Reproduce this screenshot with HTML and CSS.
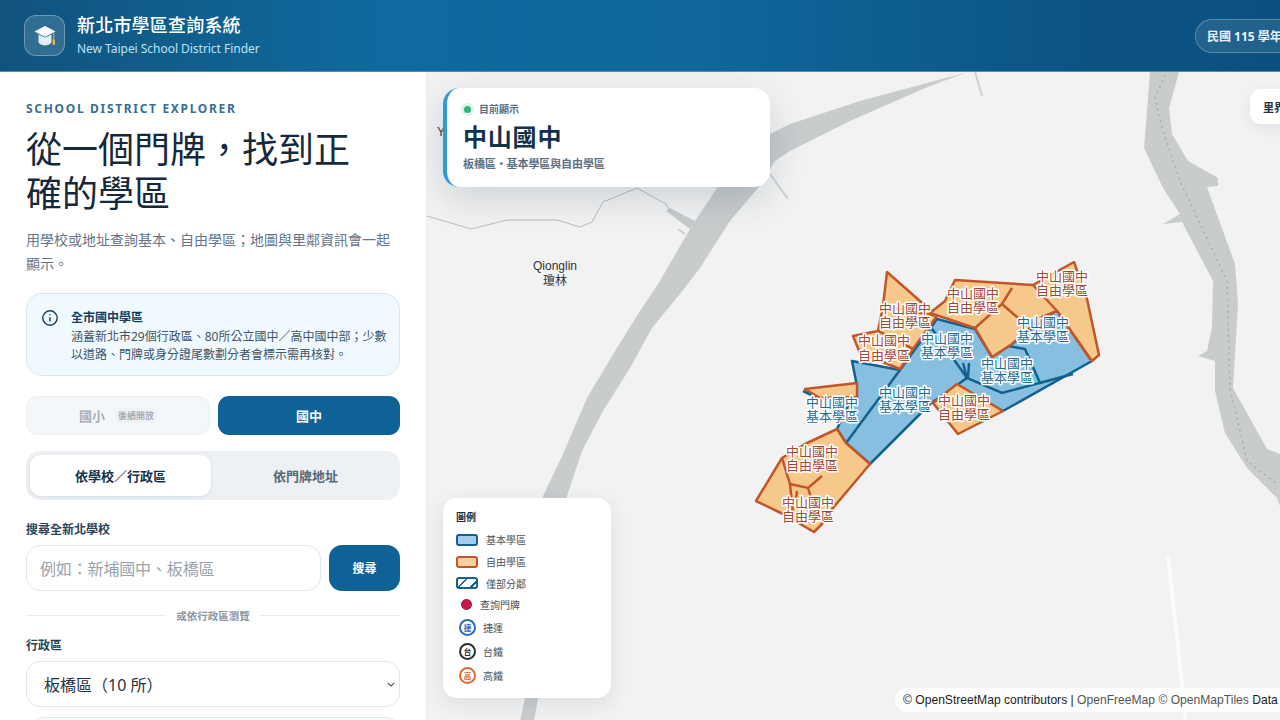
FILE: index.html
```html
<!DOCTYPE html>
<html lang="zh-Hant">
<head>
<meta charset="utf-8">
<title>新北市學區查詢系統</title>
<link rel="stylesheet" href="styles.css">
</head>
<body>
<div class="app">
  <header class="topbar">
    <div class="brand">
      <div class="logo">
        <svg width="24" height="24" viewBox="0 0 24 24">
          <path class="cap-body" d="M5.500 10.500v7c0 2.200 3 3.900 6.500 3.900s6.500-1.700 6.500-3.900v-7l-6.500 3z"/>
          <path class="cap-top" d="M12 2 1.500 7.500 12 12.800l10.500-5.300z"/>
          <path class="cap-cord" d="M20.800 8.500v8"/>
          <rect class="cap-tassel" x="19.600" y="15.500" width="2.400" height="5.500" rx="1"/>
        </svg>
      </div>
      <div class="brand-text">
        <div class="brand-title">新北市學區查詢系統</div>
        <div class="brand-sub">New Taipei School District Finder</div>
      </div>
    </div>
    <div class="year-pill">民國 115 學年度</div>
  </header>
  <main class="layout">
    <aside class="sidebar">
      <div class="eyebrow">SCHOOL DISTRICT EXPLORER</div>
      <h1 class="headline">從一個門牌&#xFF0C;找到正確的學區</h1>
      <p class="lead">用學校或地址查詢基本、自由學區&#xFF1B;地圖與里鄰資訊會一起顯示。</p>
      <div class="notice">
        <svg class="notice-icon" width="18" height="18" viewBox="0 0 18 18">
          <circle cx="9" cy="9" r="7.200"/>
          <path d="M9 8.200v4.300M9 5.300v1"/>
        </svg>
        <div class="notice-body">
          <div class="notice-title">全市國中學區</div>
          <div class="notice-text">涵蓋新北市29個行政區、80所公立國中&#xFF0F;高中國中部&#xFF1B;少數以道路、門牌或身分證尾數劃分者會標示需再核對。</div>
        </div>
      </div>
      <div class="levels">
        <div class="level level-off">國小<span class="level-tag">後續開放</span></div>
        <div class="level level-on">國中</div>
      </div>
      <div class="tabs">
        <div class="tab tab-on">依學校&#xFF0F;行政區</div>
        <div class="tab">依門牌地址</div>
      </div>
      <div class="field-label">搜尋全新北學校</div>
      <div class="search-row">
        <div class="input">例如&#xFF1A;新埔國中、板橋區</div>
        <div class="search-btn">搜尋</div>
      </div>
      <div class="divider"><span>或依行政區瀏覽</span></div>
      <div class="field-label">行政區</div>
      <div class="select">
        <span>板橋區&#xFF08;10 所&#xFF09;</span>
        <svg width="8" height="5" viewBox="0 0 10 6"><path d="M1 1l4 4 4-4"/></svg>
      </div>
      <div class="next-box"></div>
    </aside>
    <section class="map">
      <svg class="map-canvas" viewBox="427 71 853 649" width="853" height="649">
        <polygon class="water" points="968,71 860,100 790,123 770,133 745,150 717,187 695,220 680,245 660,280 640,310 615,350 587,397 563,453 543,495 525,697 520,720 534,720 538,697 567,495 582,450 603,410 630,367 652,327 680,293 700,267 730,220 758,187 775,160 790,150 850,120 930,85"/>
        <polygon class="water" points="666,210 670,207 695,220 690,228"/>
        <polygon class="water" points="1150,71 1144,147 1163,187 1180,213 1163,223 1182,221 1213,280 1212,327 1207,350 1198,355 1215,360 1215,390 1225,432 1247,467 1277,497 1280,505 1280,453 1267,448 1233,387 1238,303 1235,263 1207,186 1218,185 1218,177 1188,160 1172,133 1169,107 1179,71"/>
        <path class="water-line" d="M1165 74 L1155 97 L1163 130 L1180 180 L1227 280 L1230 387 L1247 460 L1277 483"/>
        <path class="thin" d="M770 173 L788 198 M975 71 L982 95 M678 228 L685 233"/>
        <path class="road-w" d="M1168 555 L1186 720"/>
        <path class="border" d="M427 215 L471 228 L507 219 L557 219 L580 226 L592 221 L603 201 L637 187 L666 203 L670 210"/>

        <polygon class="zone-basic" points="852,360 900,369 937,318 975,328 992,356 1012,343 1058,308 1070,325 1092,360 1003,410 957,384 930,403 870,463 846,442 837,428 857,385"/>
        <path class="line-basic" d="M930 325 L967 377 L1002 392 L1073 373 L1040 382 L1025 348 L1008 345 M967 377 L957 384 M846 442 L900 369 M963 362 L967 377 M969 362 L968 377 M803 390 L820 398"/>
        <g class="zone-free">
          <polygon points="887,271 883,305 878,330 913,348 937,315"/>
          <polygon points="853,335 878,330 913,348 900,368 860,352"/>
          <polygon points="805,388 857,382 857,396 820,397"/>
          <polygon points="955,279 1033,284 1040,280 1074,261 1087,298 1099,354 1092,360 1057,310 1042,316 1012,343 992,356 975,327 930,312 945,300"/>
          <polygon points="957,383 933,402 958,433 1003,410"/>
          <polygon points="870,463 846,442 837,428 805,443 782,457 756,500 783,513 814,531 822,523 833,507"/>
        </g>
        <path class="line-free" d="M1012 287 L1002 303 L975 327 M1002 303 L1018 317 M1033 284 L1057 310 L1090 358 M782 457 L790 483 L793 512 M790 483 L808 487 L822 475 M808 487 L813 503 M797 490 L796 500 M883 305 L937 315"/>

        <g class="labels">
          <text class="lb-free"><tspan x="905" y="312">中山國中</tspan><tspan x="905" dy="14">自由學區</tspan></text>
          <text class="lb-free"><tspan x="973" y="297">中山國中</tspan><tspan x="973" dy="14">自由學區</tspan></text>
          <text class="lb-free"><tspan x="1062" y="280">中山國中</tspan><tspan x="1062" dy="14">自由學區</tspan></text>
          <text class="lb-free"><tspan x="884" y="344">中山國中</tspan><tspan x="884" dy="15">自由學區</tspan></text>
          <text class="lb-free"><tspan x="964" y="404">中山國中</tspan><tspan x="964" dy="14">自由學區</tspan></text>
          <text class="lb-free"><tspan x="812" y="455">中山國中</tspan><tspan x="812" dy="14">自由學區</tspan></text>
          <text class="lb-free"><tspan x="808" y="506">中山國中</tspan><tspan x="808" dy="14">自由學區</tspan></text>
          <text class="lb-basic"><tspan x="947" y="342">中山國中</tspan><tspan x="947" dy="14">基本學區</tspan></text>
          <text class="lb-basic"><tspan x="1043" y="326">中山國中</tspan><tspan x="1043" dy="14">基本學區</tspan></text>
          <text class="lb-basic"><tspan x="1007" y="367">中山國中</tspan><tspan x="1007" dy="14">基本學區</tspan></text>
          <text class="lb-basic"><tspan x="905" y="396">中山國中</tspan><tspan x="905" dy="14">基本學區</tspan></text>
          <text class="lb-basic"><tspan x="832" y="406">中山國中</tspan><tspan x="832" dy="14">基本學區</tspan></text>
          <text class="lb-place"><tspan x="555" y="269">Qionglin</tspan><tspan x="555" dy="15">瓊林</tspan></text>
          <text class="lb-place" x="441" y="135">Y</text>
        </g>
      </svg>

      <div class="current">
        <div class="current-status"><span class="status-dot"></span>目前顯示</div>
        <div class="current-name">中山國中</div>
        <div class="current-sub">板橋區・基本學區與自由學區</div>
      </div>
      <div class="boundary-chip">里界顯示</div>
      <div class="legend">
        <div class="legend-title">圖例</div>
        <div class="legend-row"><span class="swatch sw-basic"></span>基本學區</div>
        <div class="legend-row"><span class="swatch sw-free"></span>自由學區</div>
        <div class="legend-row"><span class="swatch sw-part"></span>僅部分鄰</div>
        <div class="legend-row row-dot"><span class="pin"></span>查詢門牌</div>
        <div class="legend-row row-st"><span class="st st-mrt">捷</span>捷運</div>
        <div class="legend-row row-st"><span class="st st-tra">台</span>台鐵</div>
        <div class="legend-row row-st"><span class="st st-hsr">高</span>高鐵</div>
      </div>
      <div class="attrib">© OpenStreetMap contributors | <span class="attrib-link">OpenFreeMap © OpenMapTiles</span> Data from OpenStreetMap</div>
    </section>
  </main>
</div>
</body>
</html>
```
FILE: styles.css
```css
* { box-sizing: border-box; }
html, body { margin: 0; height: 100%; }
body {
  font-family: "Noto Sans", "Noto Sans CJK TC", sans-serif;
  color: #14324a;
  overflow: hidden;
  background: #fff;
}
.app { width: 1280px; height: 720px; display: flex; flex-direction: column; overflow: hidden; }

.topbar {
  height: 72px;
  flex: none;
  display: flex;
  align-items: center;
  justify-content: space-between;
  padding: 0 0 0 24px;
  background: linear-gradient(90deg, #11537d 0%, #0f6a9f 30%, #0f679b 55%, #0c5384 85%, #0b5080 100%);
  border-bottom: 1px solid #5d8cab;
  overflow: hidden;
}
.brand { display: flex; align-items: center; gap: 12px; }
.logo {
  width: 41px; height: 41px;
  border-radius: 12px;
  background: rgba(255,255,255,.14);
  border: 1px solid rgba(255,255,255,.3);
  display: flex; align-items: center; justify-content: center;
}
.cap-top { fill: #fff; }
.cap-body { fill: #e3edf3; }
.cap-cord { stroke: #e9b949; stroke-width: 1; fill: none; }
.cap-tassel { fill: #e9b949; }
.brand-text { display: flex; flex-direction: column; gap: 2px; margin-top: -1px; }
.brand-title { font-size: 18px; font-weight: 500; line-height: 26px; color: #fff; letter-spacing: .2px; }
.brand-sub { font-size: 12px; line-height: 18px; color: #bfe2f6; letter-spacing: -.03px; }
.year-pill {
  width: 130px; height: 34px;
  margin-right: -45px;
  flex: none;
  display: flex; align-items: center;
  padding-left: 11px;
  border-radius: 17px;
  background: rgba(255,255,255,.1);
  border: 1px solid rgba(255,255,255,.25);
  color: #e4f3fb;
  font-size: 12px;
  font-weight: 700;
  white-space: nowrap;
}

.layout { flex: 1; display: flex; min-height: 0; }
.sidebar {
  width: 427px;
  flex: none;
  padding: 28px 26px 0 26px;
  background: #fff;
  border-right: 1px solid #e6eaed;
  overflow: hidden;
}
.eyebrow { font-size: 12px; font-weight: 700; letter-spacing: 1.68px; color: #3b6e91; line-height: 18px; }
.headline {
  margin: 7px 0 0;
  max-width: 340px;
  font-family: "Noto Sans CJK TC", sans-serif;
  font-size: 36px;
  font-weight: 400;
  line-height: 44px;
  color: #15293b;
}
.lead { margin: 15px 0 0; font-size: 14px; line-height: 24px; color: #64748b; }

.notice {
  margin-top: 17px;
  height: 83px;
  display: flex;
  gap: 12px;
  padding: 15px 10px 0 14px;
  border: 1px solid #d5e8f2;
  border-radius: 16px;
  background: #f0f9fe;
}
.notice-icon { flex: none; }
.notice-icon circle, .notice-icon path { fill: none; stroke: #1f3f58; stroke-width: 1.400; }
.notice-title { font-size: 12px; font-weight: 700; line-height: 18px; color: #14405f; }
.notice-text { margin-top: 1px; font-size: 12px; line-height: 18px; color: #3e5568; }

.levels { margin-top: 20px; display: flex; gap: 8px; }
.level {
  flex: 1; height: 39px;
  display: flex; align-items: center; justify-content: center;
  border-radius: 11px;
  font-size: 13px; font-weight: 700;
}
.level-off { background: #f4f7f9; border: 1px solid #edf1f4; color: #a7afb8; }
.level-tag { margin-left: 10px; padding: 1px 3px; border-radius: 6px; background: #eff2f5; font-size: 9px; font-weight: 500; color: #98a1ab; }
.level-on { background: #0e6296; color: #fff; }

.tabs {
  margin-top: 16px;
  height: 49px;
  display: flex;
  gap: 4px;
  padding: 4px;
  border-radius: 14px;
  background: #edf1f4;
}
.tab {
  flex: 1;
  display: flex; align-items: center; justify-content: center;
  border-radius: 11px;
  font-size: 13px; font-weight: 700;
  color: #566879;
}
.tab-on { background: #fff; color: #14324a; box-shadow: 0 1px 3px rgba(20,50,74,.12); }

.field-label { font-size: 12px; font-weight: 700; line-height: 18px; color: #28435a; }
.tabs + .field-label { margin-top: 21px; }
.search-row { margin-top: 6px; display: flex; gap: 8px; }
.input {
  flex: 1; height: 46px;
  display: flex; align-items: center;
  padding-left: 13px;
  border: 1px solid #e1e7ec;
  border-radius: 14px;
  font-size: 16px;
  letter-spacing: -.15px;
  color: #9aa3ad;
}
.search-btn {
  width: 71px; height: 46px;
  display: flex; align-items: center; justify-content: center;
  border-radius: 13px;
  background: #0e6296;
  color: #fff;
  font-size: 12px; font-weight: 700;
}
.divider {
  margin-top: 16px;
  height: 16px;
  display: flex; align-items: center; gap: 10px;
  font-size: 10.500px; font-weight: 700; color: #8a96a2;
}
.divider::before, .divider::after { content: ""; flex: 1; height: 1px; background: #e8ecef; }
.divider + .field-label { margin-top: 14px; }
.select {
  margin-top: 6px;
  height: 46px;
  display: flex; align-items: center; justify-content: space-between;
  padding: 0 4px 0 17px;
  border: 1px solid #e1e7ec;
  border-radius: 14px;
  font-size: 16px;
  color: #26333f;
}
.select svg path { fill: none; stroke: #33424f; stroke-width: 1.300; }
.next-box { margin: 10px 0 0 4px; height: 40px; border: 1px solid #dcebe9; border-radius: 14px; background: #f5fbfa; }

.map { position: relative; flex: 1; background: #f2f2f2; overflow: hidden; }
.map-canvas { position: absolute; left: 0; top: 0; }
.water { fill: #c8cccd; }
.water-line { fill: none; stroke: #a6abae; stroke-width: 1.500; stroke-dasharray: 2 4; }
.thin { fill: none; stroke: #cfd2d3; stroke-width: 2; }
.road-w { fill: none; stroke: #fbfbfb; stroke-width: 4; }
.border { fill: none; stroke: #b9bdbf; stroke-width: 1; }
.zone-free polygon { fill: #f6c98a; stroke: #c1562a; stroke-width: 2.500; stroke-linejoin: round; }
.line-free { fill: none; stroke: #c1562a; stroke-width: 2.500; }
.zone-basic { fill: #86bfe0; stroke: #14608f; stroke-width: 2.500; stroke-linejoin: round; }
.line-basic { fill: none; stroke: #14608f; stroke-width: 2.500; }
.labels text {
  font-family: "Noto Sans CJK TC", sans-serif;
  font-size: 13px;
  text-anchor: middle;
  paint-order: stroke;
  stroke: #fff;
  stroke-width: 3px;
  stroke-linejoin: round;
}
.labels .lb-free { fill: #a04a33; }
.labels .lb-basic { fill: #1f6b95; }
.labels .lb-place { fill: #333; font-size: 12px; font-family: "Liberation Sans", "Noto Sans CJK TC", sans-serif; stroke-width: 1.500px; stroke: #f2f2f2; }

.current {
  position: absolute; left: 16px; top: 16px;
  width: 327px; height: 99px;
  padding: 13px 0 0 16px;
  background: #fff;
  border-left: 4px solid #2e9bd6;
  border-radius: 16px;
  box-shadow: 0 12px 36px rgba(20,50,74,.16);
}
.current-status { display: flex; align-items: center; gap: 8px; font-size: 10px; font-weight: 700; line-height: 16px; color: #5b7084; }
.status-dot { width: 7px; height: 7px; margin-left: 1px; border-radius: 50%; background: #2fb47d; box-shadow: 0 0 0 3px rgba(47,180,125,.16); }
.current-name { margin-top: 5px; font-size: 24px; font-weight: 700; line-height: 30px; letter-spacing: .8px; color: #12324a; }
.current-sub { margin-top: 4px; font-size: 11px; font-weight: 700; line-height: 16px; letter-spacing: -.1px; color: #5b7084; }

.boundary-chip {
  position: absolute; left: 823px; top: 17px;
  width: 90px; height: 35px;
  padding-left: 13px;
  display: flex; align-items: center;
  background: #fff;
  border-radius: 11px;
  font-size: 11px; font-weight: 700; color: #26333f;
  box-shadow: 0 4px 14px rgba(20,50,74,.08);
}

.legend {
  position: absolute; left: 16px; top: 426px;
  width: 168px; height: 200px;
  padding: 12px 13px;
  background: #fff;
  border-radius: 14px;
  box-shadow: 0 6px 20px rgba(20,50,74,.1);
}
.legend-title { font-size: 10px; font-weight: 700; line-height: 16px; color: #14324a; margin-top: -1px; }
.legend-row { height: 21.700px; display: flex; align-items: center; gap: 8px; font-size: 10px; color: #46545f; }
.legend-title + .legend-row { margin-top: 4px; }
.row-st { height: 24px; gap: 7px; padding-left: 3px; }
.row-dot { padding-left: 5px; gap: 8px; }
.swatch { width: 22px; height: 12px; border-radius: 3px; border: 2px solid; flex: none; }
.sw-basic { background: #a3cdee; border-color: #14608f; }
.sw-free { background: #fbd09f; border-color: #c1562a; }
.sw-part { border-color: #14608f; background: repeating-linear-gradient(135deg, #fff 0 5px, #14608f 5px 7px, #fff 7px 9px); }
.pin { width: 11px; height: 11px; border-radius: 50%; background: #c8164a; border: 1px solid #8f1a3d; flex: none; }
.st {
  width: 17px; height: 17px;
  flex: none;
  border-radius: 50%;
  border: 2px solid;
  display: flex; align-items: center; justify-content: center;
  font-size: 7.500px; font-weight: 700;
  background: #fff;
}
.st-mrt { border-color: #2b6cb0; color: #2b6cb0; }
.st-tra { border-color: #2a2f36; color: #2a2f36; }
.st-hsr { border-color: #dd6b34; color: #dd6b34; }

.attrib {
  position: absolute; left: 468px; top: 616px;
  height: 24px;
  padding: 0 8px;
  width: 500px;
  background: rgba(255,255,255,.92);
  border-radius: 12px;
  font-family: "Liberation Sans", sans-serif;
  font-size: 12.100px;
  line-height: 24px;
  color: #222;
  white-space: nowrap;
  overflow: hidden;
}
.attrib-link { color: #555; }
```
